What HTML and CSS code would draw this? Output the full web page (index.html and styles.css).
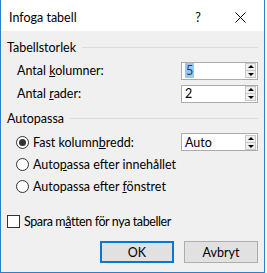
FILE: index.html
```html
<!DOCTYPE html>
<html lang="sv">

<head>
  <meta charset="UTF-8">
  <title>Infoga tabell</title>
  <link rel="stylesheet" href="styles.css">
</head>

<body>
  <div class="dialog">
    <div class="titlebar">
      <span class="title">Infoga tabell</span>
      <span class="help">?</span>
      <span class="close">
        <svg width="11" height="11" viewBox="0 0 11 11">
          <path d="M0.5 0.5 L10.5 10.5 M10.5 0.5 L0.5 10.5" stroke="#000" stroke-width="1" fill="none" />
        </svg>
      </span>
    </div>

    <div class="content">
      <div class="group-head first">
        <span>Tabellstorlek</span>
        <span class="line"></span>
      </div>
      <div class="field-row">
        <span class="label">Antal <u>k</u>olumner:</span>
        <div class="spin">
          <span class="value"><span class="selected">5</span></span>
          <div class="spin-btns">
            <span class="up"></span>
            <span class="down"></span>
          </div>
        </div>
      </div>
      <div class="field-row">
        <span class="label">Antal <u>r</u>ader:</span>
        <div class="spin">
          <span class="value">2</span>
          <div class="spin-btns">
            <span class="up"></span>
            <span class="down"></span>
          </div>
        </div>
      </div>

      <div class="group-head second">
        <span>Autopassa</span>
        <span class="line"></span>
      </div>
      <div class="radio-row">
        <span class="radio checked"></span>
        <span class="label">Fast kolumn<u>b</u>redd:</span>
        <div class="spin">
          <span class="value">Auto</span>
          <div class="spin-btns">
            <span class="up"></span>
            <span class="down"></span>
          </div>
        </div>
      </div>
      <div class="radio-row">
        <span class="radio"></span>
        <span class="label">Auto<u>p</u>assa efter innehållet</span>
      </div>
      <div class="radio-row">
        <span class="radio"></span>
        <span class="label">Autopassa efter <u>f</u>önstret</span>
      </div>

      <div class="check-row">
        <span class="checkbox"></span>
        <span class="label">Spara m<u>å</u>tten för nya tabeller</span>
      </div>

      <div class="buttons">
        <button class="btn default">OK</button>
        <button class="btn">Avbryt</button>
      </div>
    </div>
  </div>
</body>

</html>
```

FILE: styles.css
```css
* {
  padding: 0;
  margin: 0;
  box-sizing: border-box;
}

body {
  background-color: #fff;
  font-family: Lato, "Noto Sans", "Liberation Sans", sans-serif;
  font-size: 12.5px;
  color: #000;
}

.dialog {
  width: 265px;
  height: 273px;
  border: 1px solid #2d7fc9;
  border-top: none;
  background-color: #f0f0f0;
  display: flex;
  flex-direction: column;
}

.titlebar {
  height: 31px;
  background-color: #fff;
  display: flex;
  align-items: center;
  padding-left: 8px;
  padding-top: 3px;
}

.title {
  flex: 1;
}

.help {
  width: 12px;
  text-align: center;
  margin-right: 31px;
}

.close {
  display: flex;
  margin-right: 18px;
}

.content {
  padding: 0 6px 0 6px;
  display: flex;
  flex-direction: column;
}

.group-head {
  height: 18px;
  display: flex;
  align-items: center;
}

.group-head.first {
  margin-top: 7px;
}

.group-head.second {
  margin-top: 4px;
}

.group-head .line {
  flex: 1;
  height: 1px;
  background-color: #dcdcdc;
  margin-left: 6px;
}

.field-row {
  height: 23px;
  display: flex;
  align-items: center;
  padding-left: 10px;
}

.first + .field-row {
  margin-top: 3px;
}

.field-row .label {
  flex: 1;
}

.spin {
  width: 77px;
  height: 18px;
  background-color: #fff;
  border: 1px solid #acacac;
  display: flex;
  align-items: center;
  padding-left: 3px;
}

.spin .value {
  flex: 1;
}

.selected {
  background-color: #99c9ef;
  color: #1b3f78;
  padding: 0 1px;
}

.spin-btns {
  display: flex;
  flex-direction: column;
  margin-right: 1px;
}

.spin-btns span {
  width: 11px;
  height: 8px;
  background-color: #efefef;
  border: 1px solid #c8c8c8;
  position: relative;
}

.spin-btns .down {
  margin-top: -1px;
}

.spin-btns span::after {
  content: "";
  position: absolute;
  left: 2px;
  border-left: 3px solid transparent;
  border-right: 3px solid transparent;
}

.spin-btns .up::after {
  top: 1px;
  border-bottom: 3px solid #000;
}

.spin-btns .down::after {
  top: 2px;
  border-top: 3px solid #000;
}

.radio-row {
  height: 22px;
  display: flex;
  align-items: center;
  padding-left: 9px;
}

.group-head.second + .radio-row {
  margin-top: 4px;
}

.radio-row .label {
  flex: 1;
  margin-left: 4px;
}

.radio {
  width: 13px;
  height: 13px;
  border: 1px solid #333;
  border-radius: 50%;
  background-color: #fff;
  display: flex;
  align-items: center;
  justify-content: center;
}

.radio.checked::after {
  content: "";
  width: 7px;
  height: 7px;
  border-radius: 50%;
  background-color: #333;
}

.check-row {
  height: 18px;
  margin-top: 15px;
  display: flex;
  align-items: center;
}

.checkbox {
  width: 13px;
  height: 13px;
  border: 1px solid #333;
  background-color: #fff;
}

.check-row .label {
  margin-left: 4px;
  letter-spacing: -0.4px;
}

.buttons {
  margin-top: 11px;
  display: flex;
  justify-content: flex-end;
  gap: 10px;
}

.btn {
  width: 74px;
  height: 22px;
  background-color: #e1e1e1;
  border: 1px solid #adadad;
  font-family: inherit;
  font-size: inherit;
  color: #000;
}

.btn.default {
  border: 2px solid #0078d7;
}
```
